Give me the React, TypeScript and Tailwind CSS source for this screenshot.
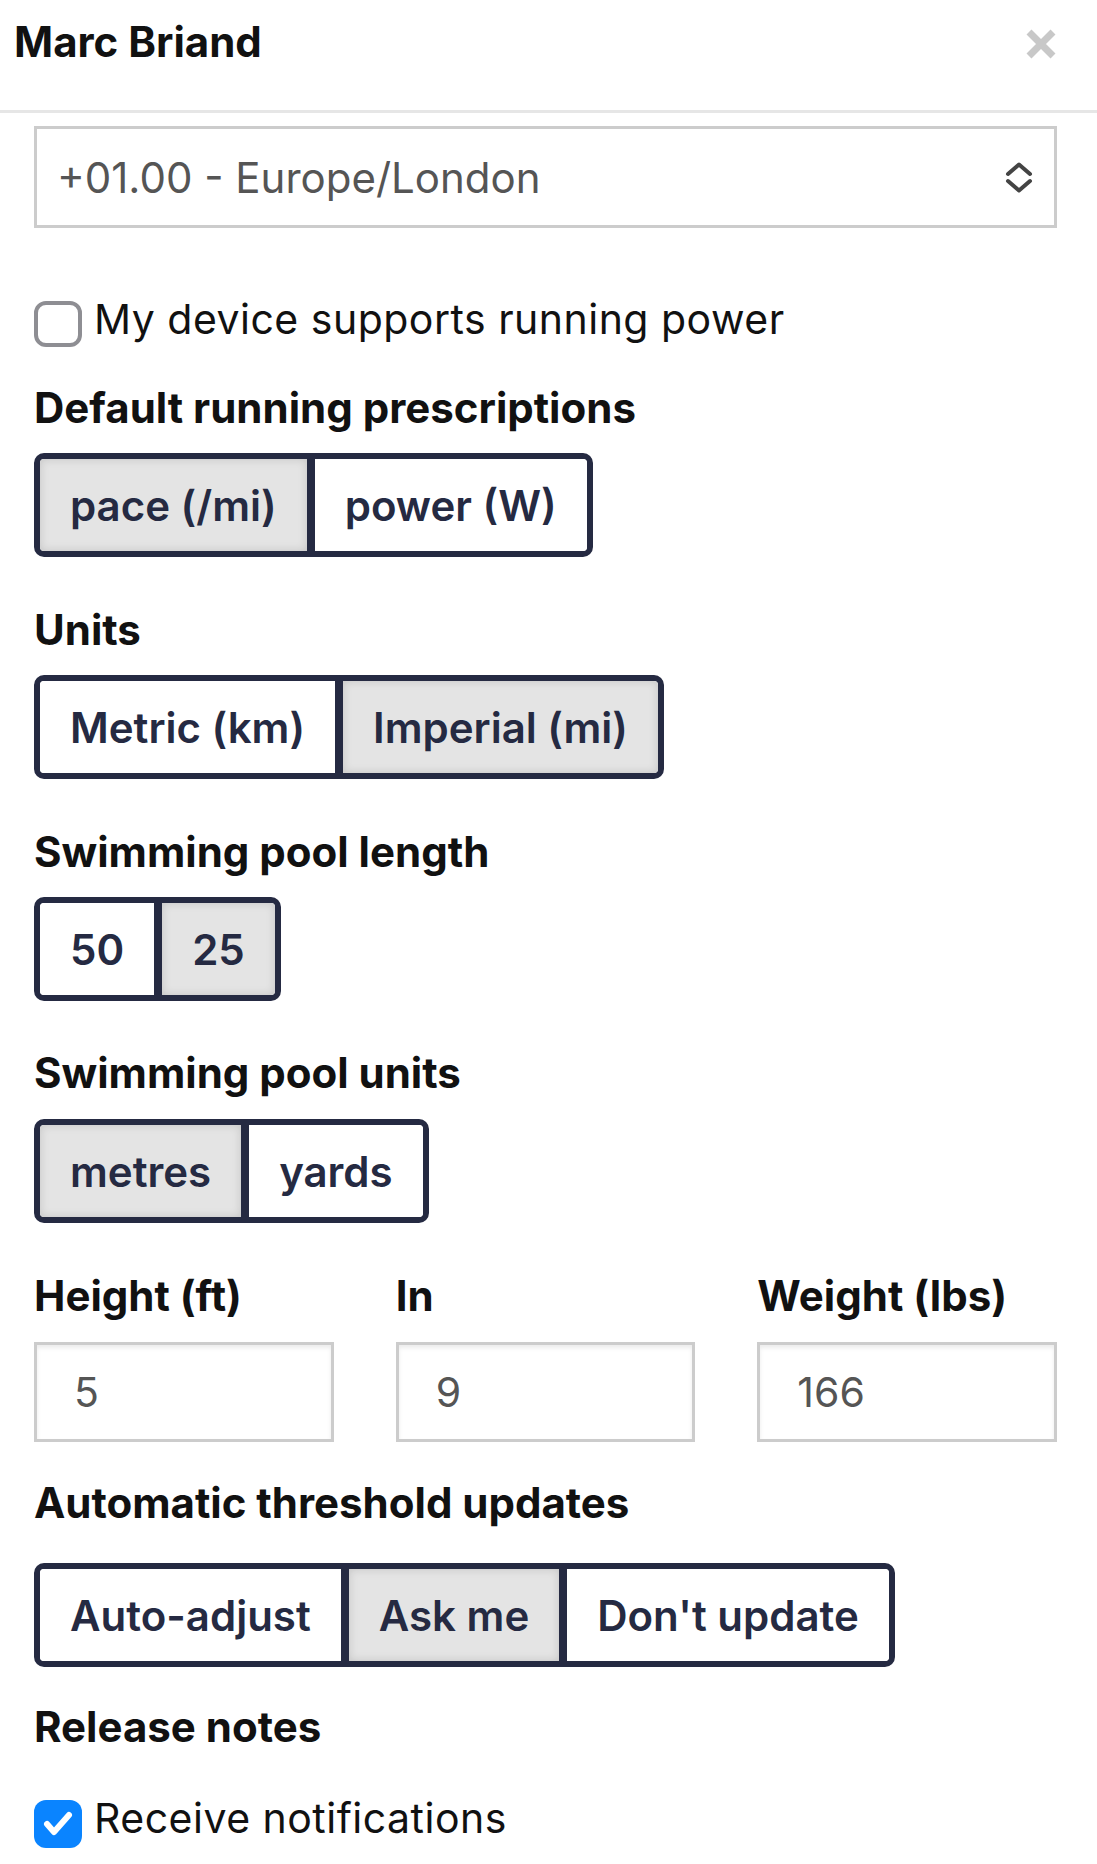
import React from 'react';
import clsx from 'clsx';

// Segmented toggle group, one option highlighted
const SegGroup: React.FC<{ options: string[]; selected: number; className?: string }> = ({ options, selected, className }) => {
  return (
    <div className={clsx('flex h-[104px] self-start overflow-hidden rounded-[10px] border-[6px] border-[#252a42]', className)}>
      {options.map((o, i) => (
        <div
          key={o}
          className={clsx(
            'flex items-center px-[30px] text-[42px] font-semibold text-[#252a42]',
            i > 0 && 'border-l-[8px] border-[#252a42]',
            i === selected ? 'bg-[#e4e4e4] shadow-[inset_0_0_10px_rgba(0,0,0,0.14)]' : 'bg-white'
          )}
        >
          {o}
        </div>
      ))}
    </div>
  );
};

const Label: React.FC<{ children: React.ReactNode; className?: string }> = ({ children, className }) => (
  <div className={clsx('text-[42px] leading-[48px] font-bold text-[#111]', className)}>{children}</div>
);

const NumberField: React.FC<{ label: string; value: string }> = ({ label, value }) => (
  <div className="flex flex-col">
    <Label>{label}</Label>
    <input
      readOnly
      defaultValue={value}
      className="mt-[22px] h-[100px] w-full border-[3px] border-[#cccccc] bg-white pl-[37px] text-[41px] text-[#555] shadow-[inset_0_3px_4px_rgba(0,0,0,0.08)] outline-none"
    />
  </div>
);

function App() {
  return (
    <div className="min-h-screen bg-white font-[family-name:Inter,sans-serif] text-[#111]">
      {/* Header */}
      <div className="flex h-[113px] items-start justify-between border-b-[3px] border-[#e6e6e6] pl-[14px] pr-[40px] pt-[17px]">
        <h1 className="text-[42px] leading-[50px] font-bold text-[#111]">Marc Briand</h1>
        <svg className="mt-[11px]" width="32" height="32" viewBox="0 0 32 32">
          <path d="M4 4L28 28M28 4L4 28" stroke="#c8c8c8" strokeWidth="7" />
        </svg>
      </div>

      <div className="flex flex-col pl-[34px] pr-[40px]">
        {/* Timezone select */}
        <div className="mt-[13px] flex h-[102px] items-center justify-between border-[3px] border-[#cccccc] pl-[20px] pr-[21px]">
          <span className="text-[42px] text-[#555]">+01.00 - Europe/London</span>
          <svg width="28" height="31" viewBox="0 0 28 31" fill="none" stroke="#444" strokeWidth="4" strokeLinecap="round" strokeLinejoin="round">
            <path d="M3 12L14 2.5L25 12" />
            <path d="M3 19L14 28.5L25 19" />
          </svg>
        </div>

        {/* Running power checkbox */}
        <div className="mt-[73px] flex items-center gap-[12px]">
          <span className="h-[46px] w-[48px] shrink-0 rounded-[12px] border-[4px] border-[#8e8e93] bg-white" />
          <span className="-mt-[10px] text-[41px] leading-[48px] tracking-[0.012em] text-[#111]">My device supports running power</span>
        </div>

        <Label className="mt-[37px]">Default running prescriptions</Label>
        <SegGroup className="mt-[21px]" options={['pace (/mi)', 'power (W)']} selected={0} />

        <Label className="mt-[49px]">Units</Label>
        <SegGroup className="mt-[21px]" options={['Metric (km)', 'Imperial (mi)']} selected={1} />

        <Label className="mt-[49px]">Swimming pool length</Label>
        <SegGroup className="mt-[21px]" options={['50', '25']} selected={1} />

        <Label className="mt-[48px]">Swimming pool units</Label>
        <SegGroup className="mt-[22px]" options={['metres', 'yards']} selected={0} />

        {/* Height / weight */}
        <div className="mt-[49px] grid grid-cols-3 gap-x-[62px]">
          <NumberField label="Height (ft)" value="5" />
          <NumberField label="In" value="9" />
          <NumberField label="Weight (lbs)" value="166" />
        </div>

        <Label className="mt-[37px]">Automatic threshold updates</Label>
        <SegGroup className="mt-[36px]" options={['Auto-adjust', 'Ask me', "Don't update"]} selected={1} />

        <Label className="mt-[36px]">Release notes</Label>
        <div className="mt-[49px] flex items-center gap-[12px]">
          <span className="flex h-[48px] w-[48px] shrink-0 items-center justify-center rounded-[12px] bg-[#0a84ff]">
            <svg width="30" height="26" viewBox="0 0 30 26" fill="none" stroke="white" strokeWidth="6" strokeLinecap="round" strokeLinejoin="round">
              <path d="M4 13L11 21L26 4" />
            </svg>
          </span>
          <span className="-mt-[12px] text-[41px] leading-[48px] tracking-[0.012em] text-[#111]">Receive notifications</span>
        </div>
      </div>
    </div>
  );
}

export default App;
